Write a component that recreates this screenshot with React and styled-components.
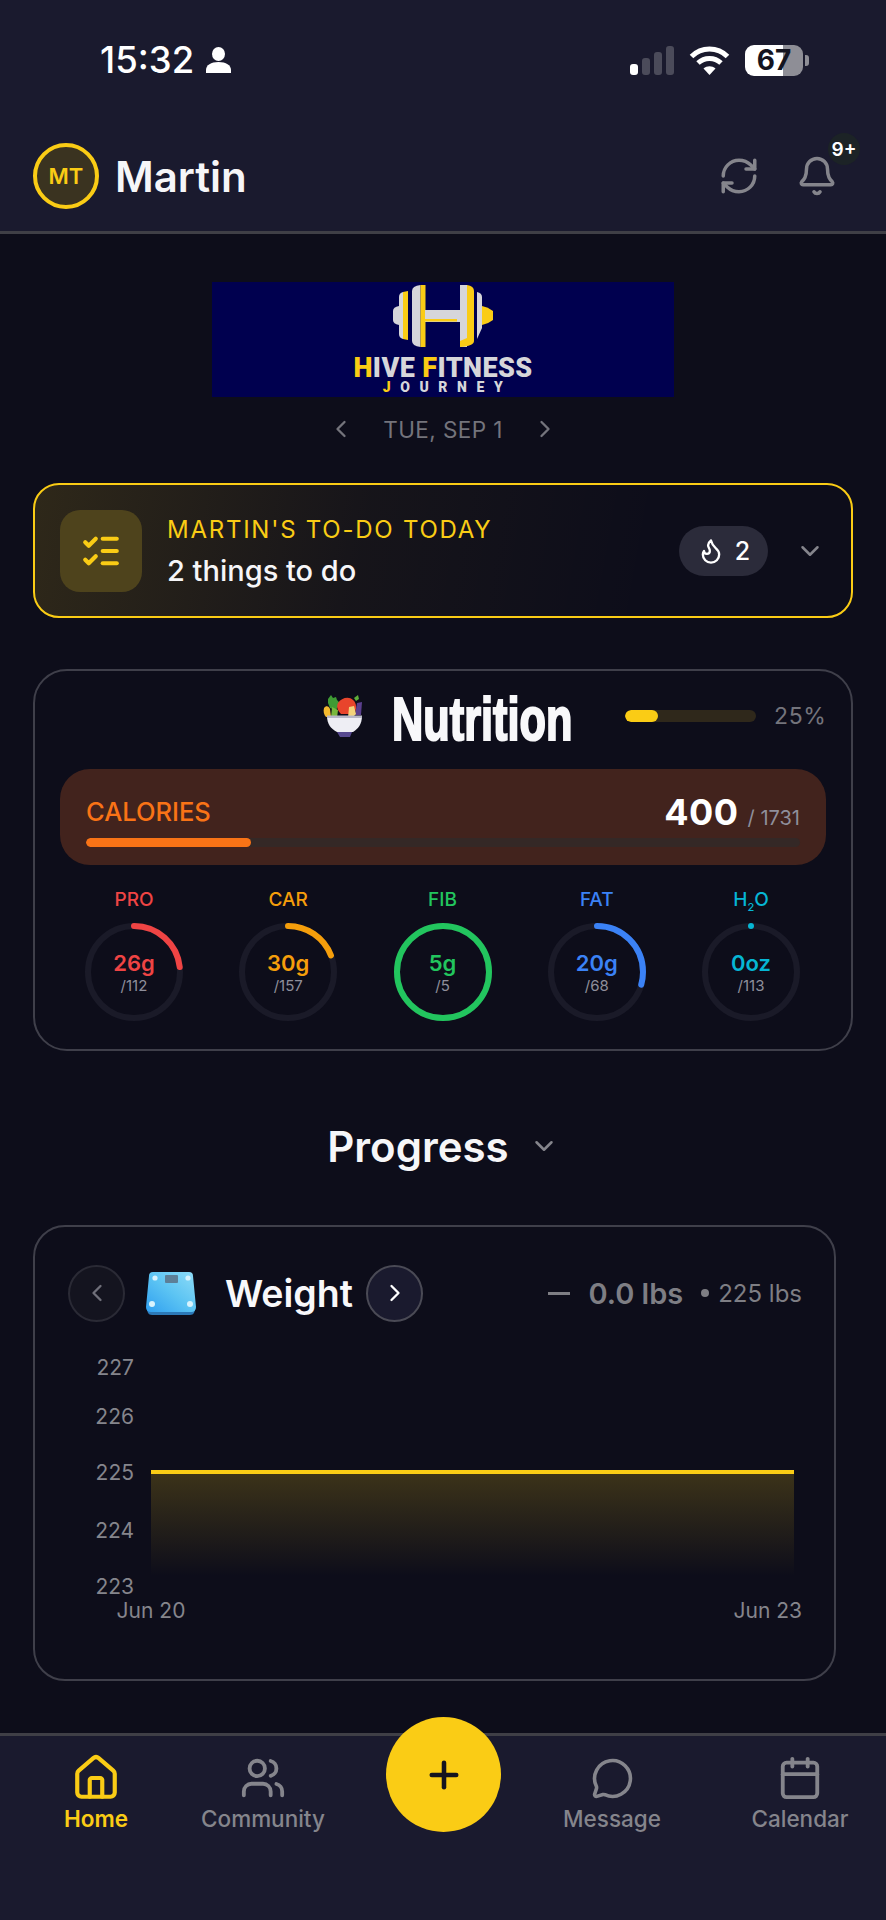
import React from 'react'
import styled, { createGlobalStyle } from 'styled-components'
import {
	Bell,
	Calendar,
	ChevronDown,
	ChevronLeft,
	ChevronRight,
	Flame,
	House,
	ListChecks,
	MessageCircle,
	Plus,
	RefreshCw,
	Users,
} from 'lucide-react'

const GlobalStyle = createGlobalStyle`
	html, body {
		margin: 0;
		padding: 0;
		background: #0d0d1a;
	}
	* {
		box-sizing: border-box;
	}
	body {
		font-family: Inter, "Liberation Sans", sans-serif;
	}
`

const Page = styled.div`
	width: 886px;
	height: 1920px;
	display: flex;
	flex-direction: column;
	overflow: hidden;
	background: #0d0d1a;
	color: #fff;
`

const TopBar = styled.header`
	height: 234px;
	flex-shrink: 0;
	background: #1a1a2e;
	border-bottom: 3px solid #3f3f46;
	display: flex;
	flex-direction: column;
`

const StatusRow = styled.div`
	height: 143px;
	padding: 44px 77px 0 100px;
	display: flex;
	justify-content: space-between;
	align-items: flex-start;
`

const Clock = styled.div`
	display: flex;
	align-items: center;
	gap: 12px;
	height: 32px;
	font-size: 36.500px;
	font-weight: 500;
`

const StatusIcons = styled.div`
	display: flex;
	align-items: center;
	height: 32px;
	gap: 15px;
`

const SignalBars = styled.div`
	display: flex;
	align-items: flex-end;
	gap: 4px;
	height: 29px;
`

const SignalBar = styled.span`
	width: 8px;
	height: ${(p) => p.$h}px;
	border-radius: 3px;
	background: ${(p) => (p.$on ? '#fff' : '#4b4b5a')};
`

const Battery = styled.div`
	width: 58px;
	height: 31px;
	border-radius: 9px;
	overflow: hidden;
	background: linear-gradient(90deg, #fff 66%, #8e8e96 66%);
	color: #14141f;
	font-size: 28px;
	font-weight: 700;
	display: flex;
	align-items: center;
	justify-content: center;
`

const BatteryWrap = styled.div`
	display: flex;
	align-items: center;
	gap: 2px;
`

const BatteryNub = styled.span`
	width: 4px;
	height: 11px;
	border-radius: 0 3px 3px 0;
	background: #8e8e96;
`

const UserRow = styled.div`
	flex: 1;
	padding: 0 48px 0 33px;
	display: flex;
	align-items: flex-start;
	justify-content: space-between;
`

const UserInfo = styled.div`
	display: flex;
	align-items: center;
	gap: 16px;
`

const Avatar = styled.div`
	width: 66px;
	height: 66px;
	border-radius: 50%;
	border: 4px solid #facc15;
	background: #3a3320;
	color: #facc15;
	font-size: 22px;
	font-weight: 600;
	display: flex;
	align-items: center;
	justify-content: center;
`

const UserName = styled.div`
	font-size: 42px;
	font-weight: 600;
	color: #f6f6f8;
`

const HeaderActions = styled.div`
	display: flex;
	align-items: center;
	gap: 36px;
	height: 66px;
	color: #85858c;
`

const BellWrap = styled.div`
	position: relative;
	display: flex;
`

const Badge = styled.span`
	position: absolute;
	top: -22px;
	right: -22px;
	width: 32px;
	height: 32px;
	border-radius: 50%;
	background: #1c2326;
	color: #fff;
	font-size: 19px;
	font-weight: 600;
	display: flex;
	align-items: center;
	justify-content: center;
`

const Main = styled.main`
	flex: 1;
	padding: 48px 33px 0;
	display: flex;
	flex-direction: column;
	min-height: 0;
`

const LogoBanner = styled.div`
	align-self: center;
	width: 462px;
	height: 115px;
	background: #00004f;
	padding-top: 3px;
	display: flex;
	flex-direction: column;
	align-items: center;
`

const LogoTitle = styled.div`
	margin-top: 10px;
	height: 22px;
	line-height: 22px;
	font-family: Roboto, sans-serif;
	font-size: 27px;
	font-weight: 900;
	letter-spacing: 0.4px;
	color: #d6d6da;
`

const LogoSub = styled.div`
	margin-top: 2px;
	height: 12px;
	line-height: 12px;
	font-family: Roboto, sans-serif;
	font-size: 14px;
	font-weight: 900;
	letter-spacing: 9.6px;
	margin-right: -9px;
	color: #d6d6da;
`

const Accent = styled.span`
	color: #facc15;
`

const DateRow = styled.div`
	align-self: center;
	margin-top: 15px;
	height: 34px;
	display: flex;
	align-items: center;
	gap: 28px;
	color: #74747c;
	font-size: 22.500px;
	letter-spacing: 0.4px;
`

const TodoCard = styled.section`
	margin-top: 37px;
	height: 135px;
	border: 2px solid #facc15;
	border-radius: 26px;
	padding: 0 26px 0 25px;
	display: flex;
	align-items: center;
	background: linear-gradient(100deg, rgba(250, 204, 21, 0.14), rgba(250, 204, 21, 0.04) 40%, rgba(250, 204, 21, 0) 75%);
`

const TodoIcon = styled.div`
	width: 82px;
	height: 82px;
	border-radius: 20px;
	background: #4e431c;
	color: #facc15;
	display: flex;
	align-items: center;
	justify-content: center;
`

const TodoText = styled.div`
	flex: 1;
	margin-left: 25px;
	padding-top: 2px;
	display: flex;
	flex-direction: column;
	gap: 9px;
`

const TodoTitle = styled.div`
	color: #facc15;
	font-size: 24px;
	line-height: 30px;
	letter-spacing: 1.750px;
`

const TodoBody = styled.div`
	font-size: 29px;
	line-height: 34px;
	font-weight: 500;
	color: #f6f6f8;
`

const StreakPill = styled.div`
	width: 89px;
	height: 50px;
	border-radius: 25px;
	background: #2b2b3a;
	display: flex;
	align-items: center;
	justify-content: center;
	gap: 10px;
	font-size: 25px;
	font-weight: 500;
`

const Expand = styled.div`
	margin-left: 27px;
	color: #85858c;
	display: flex;
`

const NutritionCard = styled.section`
	margin-top: 51px;
	height: 382px;
	border: 2px solid #3f3f4a;
	border-radius: 34px;
	padding: 0 25px;
	display: flex;
	flex-direction: column;
`

const NutritionHead = styled.div`
	height: 98px;
	padding-bottom: 8px;
	display: flex;
	align-items: center;
	justify-content: flex-end;
`

const NutritionTitle = styled.h2`
	margin: 6px 54px 0 25px;
	width: 179px;
	white-space: nowrap;
	font-family: "Liberation Sans", sans-serif;
	font-size: 61px;
	font-weight: 700;
	line-height: 60px;
	color: #f8f8fa;
	-webkit-text-stroke: 2.200px #f8f8fa;
	transform: scaleX(0.71);
	transform-origin: left center;
`

const Track = styled.div`
	width: ${(p) => p.$w};
	height: ${(p) => p.$h}px;
	border-radius: ${(p) => p.$h / 2}px;
	background: ${(p) => p.$bg};
	overflow: hidden;
`

const Fill = styled.div`
	height: 100%;
	border-radius: inherit;
	background: ${(p) => p.$color};
`

const Percent = styled.span`
	margin-left: 18px;
	width: 52px;
	font-size: 23px;
	color: #74747c;
	letter-spacing: 0.6px;
`

const CaloriesPanel = styled.div`
	height: 96px;
	border-radius: 30px;
	background: #42231d;
	padding: 16px 26px 0;
	display: flex;
	flex-direction: column;
`

const CaloriesRow = styled.div`
	height: 53px;
	display: flex;
	justify-content: space-between;
	align-items: center;
`

const CaloriesLabel = styled.span`
	color: #f97316;
	font-size: 25.500px;
	font-weight: 500;
`

const CaloriesValue = styled.span`
	font-size: 36px;
	font-weight: 700;
	letter-spacing: 0.5px;
`

const CaloriesGoal = styled.span`
	margin-left: 9px;
	font-size: 20px;
	font-weight: 400;
	color: #8f8f9b;
`

const MacroRow = styled.div`
	margin-top: 23px;
	padding: 0 26px 0 25px;
	display: flex;
	justify-content: space-between;
`

const Macro = styled.div`
	width: 98px;
	display: flex;
	flex-direction: column;
	align-items: center;
	color: ${(p) => p.$color};
`

const MacroLabel = styled.div`
	height: 24px;
	line-height: 24px;
	font-size: 19px;
	font-weight: 500;
	margin-bottom: 11px;

	sub {
		font-size: 11px;
		line-height: 0;
	}
`

const Ring = styled.div`
	position: relative;
	width: 98px;
	height: 98px;
`

const RingText = styled.div`
	position: absolute;
	inset: 0;
	padding-top: 27px;
	display: flex;
	flex-direction: column;
	align-items: center;
`

const RingValue = styled.div`
	font-size: 22px;
	line-height: 26px;
	font-weight: 600;
`

const RingGoal = styled.div`
	font-size: 15px;
	line-height: 20px;
	color: #8f8f9b;
`

const ProgressHeading = styled.div`
	margin-top: 67px;
	height: 56px;
	display: flex;
	align-items: center;
	justify-content: center;
	gap: 20px;
	font-size: 42px;
	font-weight: 600;
	color: #f6f6f8;

	svg {
		color: #85858c;
	}
`

const WeightCard = styled.section`
	margin-top: 51px;
	width: 803px;
	height: 456px;
	border: 2px solid #3f3f4a;
	border-radius: 32px;
	padding: 37px 33px 0;
	display: flex;
	flex-direction: column;
`

const WeightHead = styled.div`
	height: 58px;
	display: flex;
	align-items: center;
`

const RoundButton = styled.div`
	width: 57px;
	height: 57px;
	flex-shrink: 0;
	border-radius: 50%;
	border: 2px solid ${(p) => (p.$active ? '#4a4a55' : '#2a2a35')};
	background: ${(p) => (p.$active ? '#1a1a2e' : '#14141f')};
	color: ${(p) => (p.$active ? '#fff' : '#70707a')};
	display: flex;
	align-items: center;
	justify-content: center;
`

const ScaleSlot = styled.div`
	margin-left: 21px;
	display: flex;
`

const WeightTitle = styled.div`
	margin: 0 13px 0 29px;
	font-size: 37.500px;
	font-weight: 600;
	color: #f8f8fa;
`

const WeightStats = styled.div`
	margin-left: auto;
	margin-right: -1px;
	display: flex;
	align-items: center;
	color: #7e7e84;
`

const StatDash = styled.span`
	width: 22px;
	height: 3px;
	margin-right: 18px;
	background: #7e7e84;
`

const StatDelta = styled.span`
	font-size: 29px;
	font-weight: 600;
`

const StatDot = styled.span`
	width: 8px;
	height: 8px;
	margin: 0 9px 0 18px;
	border-radius: 50%;
	background: #7e7e84;
`

const StatTotal = styled.span`
	font-size: 24px;
`

const ChartSvg = styled.svg`
	display: block;
	margin: 22px 0 0 -33px;
	width: 799px;
	height: 300px;

	text {
		font-family: Inter, sans-serif;
		font-size: 21px;
		fill: #85858c;
	}
`

const BottomNav = styled.nav`
	position: relative;
	height: 187px;
	flex-shrink: 0;
	background: #1a1a2e;
	border-top: 3px solid #3f3f46;
	display: grid;
	grid-template-columns: 192px 142px 218px 120px 214px;
	padding-top: 19px;
	align-items: start;
`

const NavItem = styled.div`
	display: flex;
	flex-direction: column;
	align-items: center;
	gap: 4px;
	font-size: 22.500px;
	font-weight: ${(p) => (p.$active ? 600 : 500)};
	color: ${(p) => (p.$active ? '#facc15' : '#85858c')};
	padding-left: ${(p) => p.$shift || 0}px;
	white-space: nowrap;
`

const NavIcon = styled.div`
	height: 46px;
	display: flex;
	align-items: center;
	justify-content: center;
`

const Fab = styled.div`
	position: absolute;
	left: 386px;
	top: -19px;
	width: 115px;
	height: 115px;
	border-radius: 50%;
	background: #facc15;
	color: #14141f;
	display: flex;
	align-items: center;
	justify-content: center;
`

const PersonGlyph = () => (
	<svg width="25" height="26" viewBox="0 0 25 26" fill="#fff">
		<ellipse cx="12.5" cy="7" rx="6.5" ry="7" />
		<path d="M0 26v-3c0-5 5-8 12.5-8S25 18 25 23v3z" />
	</svg>
)

const WifiGlyph = () => (
	<svg width="41" height="29" viewBox="0 0 41 29" fill="none" stroke="#fff" strokeWidth="5">
		<path d="M2.5 10.5c10-10 26-10 36 0" />
		<path d="M9 17c6.500-6 16.500-6 23 0" />
		<path d="M20.500 29l-6-6.500c3.500-3 8.500-3 12 0z" fill="#fff" stroke="none" />
	</svg>
)

const Dumbbell = () => (
	<svg width="100" height="62" viewBox="0 0 100 62">
		<path d="M0 26q0-4 6-5v19q-6-1-6-5z" fill="#d6d6da" />
		<path d="M6 12q0-4 4-5v47q-4-1-4-5z" fill="#d6d6da" />
		<path d="M10 7l5-1v49l-5-1z" fill="#facc15" />
		<path d="M19 6q0-5 8.500-6V62Q19 61 19 56z" fill="#d6d6da" />
		<rect x="27.500" y="0" width="5" height="62" fill="#facc15" />
		<rect x="32" y="25" width="36" height="12" fill="#d6d6da" />
		<rect x="32" y="34" width="32" height="2.500" fill="#facc15" />
		<rect x="67" y="0" width="7" height="62" fill="#d6d6da" />
		<path d="M74 0q7 1 7 6v50q0 5-14 6v-6l7-3z" fill="#facc15" />
		<path d="M84 7q5 1 5 5v31l-5 11z" fill="#d6d6da" />
		<path d="M89 21q6 1 11 5v9q-5 4-11 5z" fill="#facc15" />
	</svg>
)

const SaladBowl = () => (
	<svg width="44" height="42" viewBox="0 0 44 42">
		<path d="M5 4l3-4 2 3 3-1 1 3 3 3-4 7-6-2-2-5z" fill="#3f9b34" />
		<path d="M31 3l4-3 1 4-3 2z" fill="#5fae3a" />
		<path d="M15 8c3-5 11-7 15-3 4 3 4 10 1 14H18c-3-3-5-7-3-11z" fill="#e8452c" />
		<path d="M1 13c2-3 5-2 6 1l1 8H3c-2-2-3-6-2-9z" fill="#f4b92e" />
		<path d="M34 8l5-1-1 13h-6z" fill="#5b3f8e" />
		<path d="M26 12l5-1 2 8-4 4h-4z" fill="#f3d27a" />
		<path d="M9 12l6 3-1 8H8z" fill="#79b83c" />
		<path d="M4 21h35c0 8-4 13-9 16H14C8 34 4 29 4 21z" fill="#eeeef4" />
		<path d="M4 20.500h35v2.500H4z" fill="#b7b7c6" />
		<path d="M14 37h15l-2 5H17z" fill="#57498f" />
	</svg>
)

const ScaleIcon = () => (
	<svg width="50" height="43" viewBox="0 0 50 43">
		<defs>
			<linearGradient id="scaleFace" x1="1" y1="0" x2="0" y2="1">
				<stop offset="0" stopColor="#8fdcf7" />
				<stop offset="0.5" stopColor="#5cc4f3" />
				<stop offset="1" stopColor="#2f9ff0" />
			</linearGradient>
		</defs>
		<path d="M1 38h48l-1 3q-1 2-4 2H6q-3 0-4-2z" fill="#2c79b8" />
		<path d="M7 0h36q4 0 4 4l3 31q0 5-5 5H5q-5 0-5-5L3 4q0-4 4-4z" fill="url(#scaleFace)" />
		<rect x="19" y="3" width="13" height="8" rx="1" fill="#5d7f97" />
		<circle cx="9" cy="6" r="2.600" fill="#d8f3fd" />
		<circle cx="42" cy="6" r="2.600" fill="#d8f3fd" />
		<circle cx="6" cy="32" r="3" fill="#d8f3fd" />
		<circle cx="44" cy="32" r="3" fill="#d8f3fd" />
	</svg>
)

const macros = [
	{ label: 'PRO', value: '26g', goal: '/112', pct: 0.232, color: '#ef4444' },
	{ label: 'CAR', value: '30g', goal: '/157', pct: 0.191, color: '#f59e0b' },
	{ label: 'FIB', value: '5g', goal: '/5', pct: 1, color: '#22c55e' },
	{ label: 'FAT', value: '20g', goal: '/68', pct: 0.294, color: '#3b82f6' },
	{ label: 'H2O', value: '0oz', goal: '/113', pct: 0, color: '#06b6d4' },
]

const MacroRing = ({ pct, color }) => {
	const r = 46
	const c = 2 * Math.PI * r
	return (
		<svg width="98" height="98" viewBox="0 0 98 98">
			<circle cx="49" cy="49" r={r} fill="none" stroke="#1a1a28" strokeWidth="6" />
			<circle
				cx="49"
				cy="49"
				r={r}
				fill="none"
				stroke={color}
				strokeWidth="6"
				strokeLinecap="round"
				strokeDasharray={`${pct * c} ${c}`}
				transform="rotate(-90 49 49)"
			/>
		</svg>
	)
}

const navItems = [
	{ label: 'Home', Icon: House, size: 50, active: true },
	{ label: 'Community', Icon: Users, size: 46 },
	null,
	{ label: 'Message', Icon: MessageCircle, size: 43 },
	{ label: 'Calendar', Icon: Calendar, size: 46, shift: 42 },
]

const App = () => {
	return (
		<Page>
			<GlobalStyle />
			<TopBar>
				<StatusRow>
					<Clock>
						15:32
						<PersonGlyph />
					</Clock>
					<StatusIcons>
						<SignalBars>
							<SignalBar $on $h={11} />
							<SignalBar $h={17} />
							<SignalBar $h={23} />
							<SignalBar $h={29} />
						</SignalBars>
						<WifiGlyph />
						<BatteryWrap>
							<Battery>67</Battery>
							<BatteryNub />
						</BatteryWrap>
					</StatusIcons>
				</StatusRow>
				<UserRow>
					<UserInfo>
						<Avatar>MT</Avatar>
						<UserName>Martin</UserName>
					</UserInfo>
					<HeaderActions>
						<RefreshCw size={42} strokeWidth={2} />
						<BellWrap>
							<Bell size={42} strokeWidth={2} />
							<Badge>9+</Badge>
						</BellWrap>
					</HeaderActions>
				</UserRow>
			</TopBar>

			<Main>
				<LogoBanner>
					<Dumbbell />
					<LogoTitle>
						<Accent>H</Accent>IVE <Accent>F</Accent>ITNESS
					</LogoTitle>
					<LogoSub>
						<Accent>J</Accent>OURNEY
					</LogoSub>
				</LogoBanner>
				<DateRow>
					<ChevronLeft size={28} />
					TUE, SEP 1
					<ChevronRight size={28} />
				</DateRow>

				<TodoCard>
					<TodoIcon>
						<ListChecks size={42} strokeWidth={2.4} />
					</TodoIcon>
					<TodoText>
						<TodoTitle>MARTIN'S TO-DO TODAY</TodoTitle>
						<TodoBody>2 things to do</TodoBody>
					</TodoText>
					<StreakPill>
						<Flame size={28} strokeWidth={2} />2
					</StreakPill>
					<Expand>
						<ChevronDown size={30} />
					</Expand>
				</TodoCard>

				<NutritionCard>
					<NutritionHead>
						<SaladBowl />
						<NutritionTitle>Nutrition</NutritionTitle>
						<Track $w="131px" $h={12} $bg="#2f281b">
							<Fill $color="#facc15" style={{ width: '25%' }} />
						</Track>
						<Percent>25%</Percent>
					</NutritionHead>
					<CaloriesPanel>
						<CaloriesRow>
							<CaloriesLabel>CALORIES</CaloriesLabel>
							<span>
								<CaloriesValue>400</CaloriesValue>
								<CaloriesGoal>/ 1731</CaloriesGoal>
							</span>
						</CaloriesRow>
						<Track $w="100%" $h={9} $bg="#342826">
							<Fill $color="#f97316" style={{ width: '23.100%' }} />
						</Track>
					</CaloriesPanel>
					<MacroRow>
						{macros.map((m) => (
							<Macro key={m.label} $color={m.color}>
								<MacroLabel>
									{m.label === 'H2O' ? (
										<>
											H<sub>2</sub>O
										</>
									) : (
										m.label
									)}
								</MacroLabel>
								<Ring>
									<MacroRing pct={m.pct} color={m.color} />
									<RingText>
										<RingValue>{m.value}</RingValue>
										<RingGoal>{m.goal}</RingGoal>
									</RingText>
								</Ring>
							</Macro>
						))}
					</MacroRow>
				</NutritionCard>

				<ProgressHeading>
					Progress
					<ChevronDown size={30} />
				</ProgressHeading>

				<WeightCard>
					<WeightHead>
						<RoundButton>
							<ChevronLeft size={28} />
						</RoundButton>
						<ScaleSlot>
							<ScaleIcon />
						</ScaleSlot>
						<WeightTitle>Weight</WeightTitle>
						<RoundButton $active>
							<ChevronRight size={28} />
						</RoundButton>
						<WeightStats>
							<StatDash />
							<StatDelta>0.0 lbs</StatDelta>
							<StatDot />
							<StatTotal>225 lbs</StatTotal>
						</WeightStats>
					</WeightHead>
					<ChartSvg viewBox="0 0 799 300">
						<defs>
							<linearGradient id="weightArea" x1="0" y1="0" x2="0" y2="1">
								<stop offset="0" stopColor="#facc15" stopOpacity="0.2" />
								<stop offset="1" stopColor="#facc15" stopOpacity="0" />
							</linearGradient>
						</defs>
						<text x="99" y="31" textAnchor="end">227</text>
						<text x="99" y="80" textAnchor="end">226</text>
						<text x="99" y="136" textAnchor="end">225</text>
						<text x="99" y="194" textAnchor="end">224</text>
						<text x="99" y="250" textAnchor="end">223</text>
						<text x="116" y="274" textAnchor="middle">Jun 20</text>
						<text x="767" y="274" textAnchor="end">Jun 23</text>
						<rect x="116" y="128" width="643" height="104" fill="url(#weightArea)" />
						<rect x="116" y="126" width="643" height="4" fill="#facc15" />
					</ChartSvg>
				</WeightCard>
			</Main>

			<BottomNav>
				{navItems.map((item, i) =>
					item ? (
						<NavItem key={item.label} $active={item.active} $shift={item.shift}>
							<NavIcon>
								<item.Icon size={item.size} strokeWidth={2} />
							</NavIcon>
							{item.label}
						</NavItem>
					) : (
						<span key={i} />
					)
				)}
				<Fab>
					<Plus size={42} strokeWidth={2.6} />
				</Fab>
			</BottomNav>
		</Page>
	)
}

export default App
